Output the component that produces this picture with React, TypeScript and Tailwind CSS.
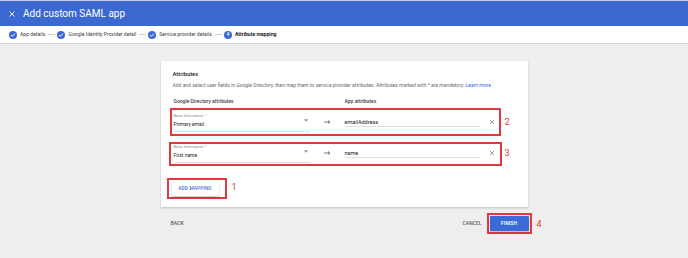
import React from 'react';

const steps = [
  { label: 'App details', done: true },
  { label: 'Google Identity Provider detail', done: true },
  { label: 'Service provider details', done: true },
  { label: 'Attribute mapping', done: false },
];

function StepIcon({ done, index }: { done: boolean; index: number }) {
  return (
    <span className="w-[8px] h-[8px] rounded-full bg-[#3b69cf] flex items-center justify-center shrink-0">
      {done ? (
        <svg width="6" height="6" viewBox="0 0 24 24" fill="none" stroke="#fff" strokeWidth="4">
          <path d="M4 12.5l5 5L20 6.5" />
        </svg>
      ) : (
        <span className="text-white text-[5px] leading-none font-medium">{index}</span>
      )}
    </span>
  );
}

function Marker({ n, className }: { n: string; className: string }) {
  return <span className={`absolute text-[9px] leading-none text-[#e53935] ${className}`}>{n}</span>;
}

function MappingRow({ value, source }: { value: string; source: string }) {
  return (
    <div className="flex items-start h-[19px]">
      <div className="w-[136px] h-[19px] border-b border-[#e0e0e0] relative">
        <div className="text-[3.8px] leading-[5px] text-[#8a8a8a]">Basic Information *</div>
        <div className="text-[5px] leading-[7px] text-[#202124] mt-[3px]">{source}</div>
        <svg className="absolute right-[2px] top-[6px]" width="4" height="3" viewBox="0 0 8 5">
          <path d="M0 0h8L4 5z" fill="#8f8f8f" />
        </svg>
      </div>
      <svg className="ml-[14px] mt-[7px]" width="7" height="4" viewBox="0 0 14 8">
        <path d="M0 4h11M8 1l4 3-4 3" stroke="#444" strokeWidth="1.4" fill="none" />
      </svg>
      <div className="ml-[14px] w-[136px] h-[14px] border-b border-[#e0e0e0] flex items-end">
        <span className="text-[5.5px] leading-[8px] text-[#202124]">{value}</span>
      </div>
      <svg className="ml-[8px] mt-[6px]" width="6" height="6" viewBox="0 0 12 12">
        <path d="M2 2l8 8M10 2l-8 8" stroke="#777" strokeWidth="1.4" />
      </svg>
    </div>
  );
}

export default function App() {
  return (
    <div className="min-h-screen bg-[#eeeeee]" style={{ fontFamily: 'Roboto, "Liberation Sans", sans-serif' }}>
      {/* Barre de titre */}
      <div className="h-[26px] bg-[#3b69cf] border-t border-[#c8cfe0] flex items-center">
        <svg className="ml-[9px]" width="6" height="6" viewBox="0 0 12 12">
          <path d="M1 1l10 10M11 1L1 11" stroke="#fff" strokeWidth="1.8" />
        </svg>
        <span className="ml-[8px] text-[10px] text-white">Add custom SAML app</span>
      </div>

      {/* Étapes */}
      <div className="h-[18px] bg-white border-b border-[#d4d4d4] flex items-center pl-[9px]">
        {steps.map((s, i) => (
          <div key={s.label} className="flex items-center">
            {i > 0 && <span className="w-[7px] h-px bg-[#cfcfcf] ml-[3px] mr-[2px]" />}
            <StepIcon done={s.done} index={i + 1} />
            <span
              className={`ml-[3px] text-[5.1px] text-[#3c4043] ${s.done ? '' : 'font-bold text-[#202124]'}`}
            >
              {s.label}
            </span>
          </div>
        ))}
      </div>

      {/* Carte */}
      <div className="w-[367px] h-[146px] mx-auto mt-[17px] bg-white shadow-[0_1px_2px_rgba(0,0,0,0.2)] relative px-[12px] pt-[9px]">
        <div className="text-[5.8px] leading-[8px] font-medium text-[#202124]">Attributes</div>
        <div className="mt-[4px] text-[5px] leading-[7px] text-[#6b6b6b] whitespace-nowrap">
          Add and select user fields in Google Directory, then map them to service provider attributes. Attributes
          marked with * are mandatory. <span className="text-[#3b6bd6]">Learn more</span>
        </div>
        <div className="mt-[9px] flex text-[5px] leading-[7px] font-medium text-[#3c4043]">
          <span className="ml-[1px] w-[171px]">Google Directory attributes</span>
          <span>App attributes</span>
        </div>

        <div className="mt-[3px] -ml-[3px] w-[331px] h-[28px] border-2 border-[#e0393e] pt-[3px] pl-[2px]">
          <MappingRow source="Primary email" value="emailAddress" />
        </div>
        <div className="mt-[6px] -ml-[4px] w-[333px] h-[24px] border-2 border-[#e0393e] pl-[3px]">
          <MappingRow source="First name" value="name" />
        </div>

        <div className="mt-[12px] -ml-[6px] w-[60px] h-[21px] border-2 border-[#e0393e] pl-[3px] pt-[2px] flex items-start">
          <button className="w-[47px] h-[14px] bg-white shadow-[0_1px_2px_rgba(0,0,0,0.25)] rounded-[1px] text-[4.8px] leading-none font-medium text-[#4a6fd0] tracking-[0.1px]">
            ADD MAPPING
          </button>
        </div>

        <Marker n="2" className="left-[344px] top-[57px]" />
        <Marker n="3" className="left-[344px] top-[88px]" />
        <Marker n="1" className="left-[71px] top-[122px]" />
      </div>

      {/* Actions */}
      <div className="w-[367px] h-[21px] mx-auto mt-[6px] flex items-center relative">
        <span className="ml-[10px] text-[5.2px] leading-none font-medium text-[#5f6368]">BACK</span>
        <span className="ml-auto text-[5px] leading-none font-medium text-[#5f6368]">CANCEL</span>
        <div className="ml-[5px] -mr-[4px] h-[21px] border-2 border-[#e0393e] p-[1px] flex">
          <button className="w-[39px] h-[15px] bg-[#3b6bd6] rounded-[1px] shadow-[0_1px_2px_rgba(0,0,0,0.25)] text-[5.2px] leading-none font-medium text-white">
            FINISH
          </button>
        </div>
        <Marker n="4" className="left-[376px] top-[7px]" />
      </div>
    </div>
  );
}
